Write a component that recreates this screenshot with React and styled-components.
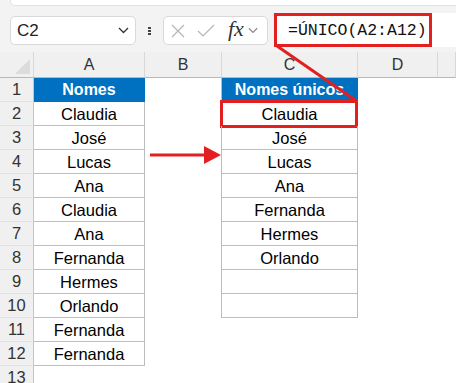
import React from 'react';
import styled, { createGlobalStyle } from 'styled-components';

const Global = createGlobalStyle`
  html, body { margin: 0; padding: 0; background: #fff; }
  body { font-family: "Liberation Sans", Arial, sans-serif; }
`;

const RED = '#e3201f';

const Root = styled.div`
  position: relative;
  width: 456px;
  height: 383px;
  overflow: hidden;
  background: #fff;
`;

const Toolbar = styled.div`
  height: 52px;
  background: #f3f3f3;
  position: relative;
  display: flex;
  align-items: flex-start;
  padding: 16px 0 0 10px;
  box-sizing: border-box;
`;

const TopStrip = styled.div`
  position: absolute;
  left: 10px;
  right: 0;
  top: 0;
  height: 5px;
  background: #fff;
  border-bottom-left-radius: 5px;
  border-bottom: 1px solid #e2e2e2;
  border-left: 1px solid #e2e2e2;
`;

const Box = styled.div`
  display: flex;
  align-items: center;
  height: 29px;
  box-sizing: border-box;
  background: #fff;
  border: 1px solid #d9d9d9;
  border-radius: 5px;
`;

const NameBox = styled(Box)`
  width: 126px;
  padding: 0 6px 0 6px;
  justify-content: space-between;
  font-size: 17px;
  color: #222;
`;

const Dots = styled.div`
  width: 27px;
  height: 29px;
  display: flex;
  flex-direction: column;
  align-items: center;
  justify-content: center;
  gap: 1px;
  & span {
    width: 3px;
    height: 2px;
    background: #444;
  }
`;

const FxBox = styled(Box)`
  width: 105px;
  padding: 0 5px 0 6px;
`;

const Fx = styled.span`
  font-family: "Liberation Serif", "Times New Roman", serif;
  font-style: italic;
  font-size: 22px;
  color: #333;
  margin: -4px 4px 0 13px;
`;

const FormulaWrap = styled.div`
  flex: 1;
  margin: -3px 0 0 6px;
  height: 34px;
  background: #fff;
  display: flex;
`;

const Formula = styled.div`
  width: 158px;
  height: 34px;
  box-sizing: border-box;
  border: 3px solid ${RED};
  font-family: "Liberation Mono", "Courier New", monospace;
  font-size: 16.5px;
  color: #111;
  display: flex;
  align-items: center;
  padding-left: 11px;
  white-space: nowrap;
`;

const Sheet = styled.div`
  display: grid;
  grid-template-columns: 34px 111px 77px 136px 80px 1fr;
  grid-template-rows: 26px repeat(13, 24px);
`;

const ColHead = styled.div`
  background: #f0f0f0;
  border-right: 1px solid #d8d8d8;
  border-bottom: 1px solid #b8b8b8;
  box-sizing: border-box;
  display: flex;
  align-items: center;
  justify-content: center;
  font-size: 16px;
  color: #333;
  position: relative;
`;

const Corner = styled.div`
  position: absolute;
  right: 3px;
  bottom: 3px;
  width: 0;
  height: 0;
  border-left: 15px solid transparent;
  border-bottom: 15px solid #dcdcdc;
`;

const RowHead = styled.div`
  background: #f0f0f0;
  border-right: 1px solid #c4c4c4;
  border-bottom: 1px solid #e2e2e2;
  box-sizing: border-box;
  display: flex;
  align-items: center;
  justify-content: center;
  font-size: 16.5px;
  color: #333;
`;

const Cell = styled.div`
  position: relative;
  box-sizing: border-box;
  display: flex;
  align-items: center;
  justify-content: center;
  padding-top: 1px;
  font-size: 16.5px;
  white-space: nowrap;
  color: #000;
  ${(p) =>
    p.$table &&
    `
    border-right: 1px solid #bdbdbd;
    border-bottom: 1px solid #bdbdbd;
  `}
  ${(p) => p.$edge && `box-shadow: -1px 0 0 #bdbdbd;`}
  ${(p) =>
    p.$head &&
    `
    background: #0070c0;
    color: #fff;
    font-weight: bold;
    font-size: 16px;
    border-color: #0070c0;
  `}
  ${(p) =>
    p.$mark &&
    `
    &::after {
      content: '';
      position: absolute;
      left: -2px;
      top: -2px;
      right: -1px;
      bottom: -3px;
      border: 3px solid ${RED};
    }
  `}
`;

const Overlay = styled.svg`
  position: absolute;
  left: 0;
  top: 0;
  pointer-events: none;
`;

const colA = ['Nomes', 'Claudia', 'José', 'Lucas', 'Ana', 'Claudia', 'Ana', 'Fernanda', 'Hermes', 'Orlando', 'Fernanda', 'Fernanda'];
const colC = ['Nomes únicos', 'Claudia', 'José', 'Lucas', 'Ana', 'Fernanda', 'Hermes', 'Orlando', '', ''];

const Chevron = ({ color = '#333', w = 11 }) => (
  <svg width={w} height="7" viewBox="0 0 11 7">
    <path d="M1 1 L5.5 5.5 L10 1" fill="none" stroke={color} strokeWidth="1.3" />
  </svg>
);

export default function App() {
  const rows = Array.from({ length: 13 }, (_, i) => i);
  return (
    <Root>
      <Global />
      <Toolbar>
        <TopStrip />
        <NameBox>
          <span>C2</span>
          <Chevron />
        </NameBox>
        <Dots>
          <span />
          <span />
          <span />
        </Dots>
        <FxBox>
          <svg width="16" height="16" viewBox="0 0 16 16">
            <path d="M2 2 L14 14 M14 2 L2 14" stroke="#b5b5b5" strokeWidth="1.2" />
          </svg>
          <svg width="18" height="14" viewBox="0 0 18 14" style={{ marginLeft: 11 }}>
            <path d="M1 7 L6 12 L17 1" fill="none" stroke="#b5b5b5" strokeWidth="1.2" />
          </svg>
          <Fx>fx</Fx>
          <Chevron color="#888" w={10} />
        </FxBox>
        <FormulaWrap>
          <Formula>=ÚNICO(A2:A12)</Formula>
        </FormulaWrap>
      </Toolbar>
      <Sheet>
        <ColHead>
          <Corner />
        </ColHead>
        {['A', 'B', 'C', 'D', ''].map((c, i) => (
          <ColHead key={i}>{c}</ColHead>
        ))}
        {rows.map((r) => {
          const a = colA[r];
          const c = colC[r];
          return (
            <React.Fragment key={r}>
              <RowHead>{r + 1}</RowHead>
              <Cell $table={a !== undefined} $head={r === 0}>
                {a}
              </Cell>
              <Cell />
              <Cell $table={c !== undefined} $edge={c !== undefined} $head={r === 0} $mark={r === 1}>
                {c}
              </Cell>
              <Cell />
              <Cell />
            </React.Fragment>
          );
        })}
      </Sheet>
      <Overlay width="456" height="383">
        <line x1="277" y1="46" x2="355" y2="100" stroke={RED} strokeWidth="3" />
        <line x1="150" y1="155" x2="206" y2="155" stroke={RED} strokeWidth="3" />
        <polygon points="204,146 221,155 204,164" fill={RED} />
      </Overlay>
    </Root>
  );
}
